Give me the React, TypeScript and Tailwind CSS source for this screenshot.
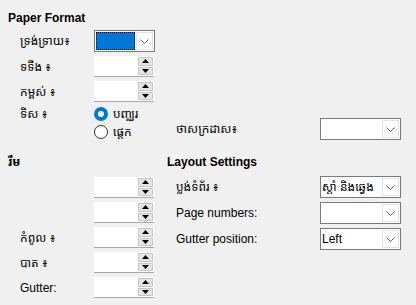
import React from "react";

const font = { fontFamily: '"Liberation Sans", "Noto Sans Khmer", "Khmer OS System", "Noto Sans", sans-serif' };

const Chevron = () => (
  <svg width="9" height="5" viewBox="0 0 9 5" fill="none">
    <path d="M0.5 0.5 L4.5 4.5 L8.5 0.5" stroke="#606060" strokeWidth="1" />
  </svg>
);

const Combo = ({ text = "", focused = false, width = "w-[81px]" }: { text?: string; focused?: boolean; width?: string }) => (
  <div className={`${width} h-[22px] flex bg-white border border-[#7a7a7a]`}>
    {focused ? (
      <div className="flex-1 m-[1px] bg-[#0078d7] border border-dotted border-black" />
    ) : (
      <div className="flex-1 pl-[1px] text-[12px] leading-[20px] text-black whitespace-nowrap overflow-hidden">{text}</div>
    )}
    <div className="w-[17px] m-[1px] ml-0 flex items-center justify-center border border-[#e2e2e2] bg-white">
      <Chevron />
    </div>
  </div>
);

const Spin = () => (
  <div className="w-[60px] h-[21px] flex bg-white border-b border-[#a8a8a8]">
    <div className="flex-1" />
    <div className="w-[16px] flex flex-col gap-[1px] py-[1px] pr-[1px]">
      <div className="flex-1 bg-[#e5e5e5] border border-[#c6c6c6] flex items-center justify-center">
        <svg width="7" height="4" viewBox="0 0 7 4"><path d="M3.5 0 L7 4 L0 4 Z" fill="#000" /></svg>
      </div>
      <div className="flex-1 bg-[#e5e5e5] border border-[#c6c6c6] flex items-center justify-center">
        <svg width="7" height="4" viewBox="0 0 7 4"><path d="M0 0 L7 0 L3.5 4 Z" fill="#000" /></svg>
      </div>
    </div>
  </div>
);

const Radio = ({ checked, label }: { checked?: boolean; label: string }) => (
  <div className="h-[18px] flex items-center gap-[5px]">
    {checked ? (
      <span className="w-[14px] h-[14px] rounded-full bg-[#0078d7] flex items-center justify-center">
        <span className="w-[6px] h-[6px] rounded-full bg-white" />
      </span>
    ) : (
      <span className="w-[14px] h-[14px] rounded-full border border-[#333333] bg-white" />
    )}
    <span className="text-[12px] text-black">{label}</span>
  </div>
);

const LeftRow = ({ label, children }: { label?: string; children: React.ReactNode }) => (
  <div className="flex items-center">
    <div className="w-[86px] pl-[12px] text-[12px] text-black whitespace-nowrap">{label}</div>
    {children}
  </div>
);

const RightRow = ({ label, children }: { label?: string; children: React.ReactNode }) => (
  <div className="flex items-center">
    <div className="w-[153px] pl-[9px] text-[12px] text-black whitespace-nowrap">{label}</div>
    {children}
  </div>
);

export default function App() {
  return (
    <div className="w-[416px] h-[305px] bg-[#f0f0f0] pl-[8px] pt-[10px] overflow-hidden" style={font}>
      <div className="h-[16px] text-[12px] font-bold leading-[17px] text-black">Paper Format</div>
      <div className="flex flex-col gap-[4px] mt-[4px]">
        <LeftRow label="ទ្រង់ទ្រាយ៖">
          <Combo focused width="w-[61px]" />
        </LeftRow>
        <LeftRow label="ទទឹង ៖">
          <Spin />
        </LeftRow>
        <LeftRow label="កម្ពស់ ៖">
          <Spin />
        </LeftRow>
      </div>
      <div className="flex mt-[3px]">
        <div className="w-[159px] flex">
          <div className="w-[86px] pl-[12px] h-[18px] leading-[18px] text-[12px] text-black">ទិស ៖</div>
          <div className="flex flex-col">
            <Radio checked label="បញ្ឈរ" />
            <Radio label="ផ្ដេក" />
          </div>
        </div>
        <div className="flex-1 pt-[13px]">
          <RightRow label="ថាសក្រដាស៖">
            <Combo />
          </RightRow>
        </div>
      </div>
      <div className="flex mt-[13px]">
        <div className="w-[159px]">
          <div className="h-[16px] text-[12px] font-bold leading-[16px] text-black">រឹម</div>
          <div className="flex flex-col gap-[4px] mt-[7px]">
            <LeftRow><Spin /></LeftRow>
            <LeftRow><Spin /></LeftRow>
            <LeftRow label="កំពូល ៖"><Spin /></LeftRow>
            <LeftRow label="បាត ៖"><Spin /></LeftRow>
            <LeftRow label="Gutter:"><Spin /></LeftRow>
          </div>
        </div>
        <div className="flex-1">
          <div className="h-[16px] text-[12px] font-bold leading-[17px] text-black">Layout Settings</div>
          <div className="flex flex-col gap-[4px] mt-[6px]">
            <RightRow label="ប្លង់ទំព័រ ៖"><Combo text="ស្ដាំ និងឆ្វេង" /></RightRow>
            <RightRow label="Page numbers:"><Combo /></RightRow>
            <RightRow label="Gutter position:"><Combo text="Left" /></RightRow>
          </div>
        </div>
      </div>
    </div>
  );
}
